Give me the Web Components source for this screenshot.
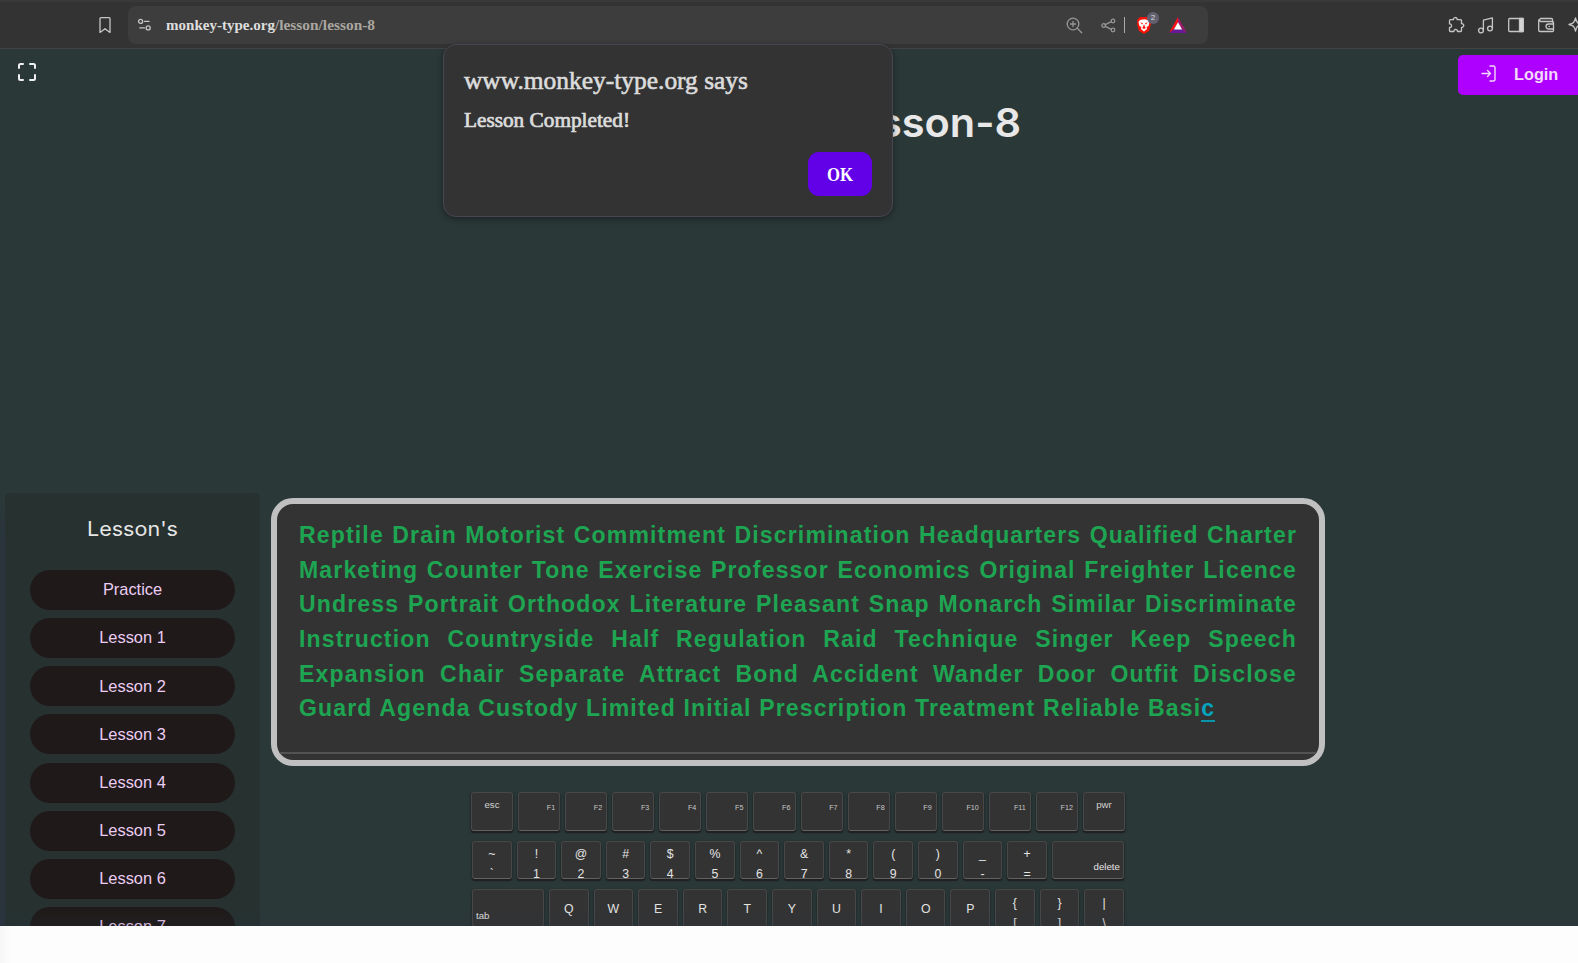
<!DOCTYPE html>
<html lang="en">
<head>
<meta charset="utf-8">
<title>Lesson-8</title>
<style>
html,body{margin:0;height:100%;overflow:hidden;background:#2b3838}
body{font-family:"Liberation Sans",Arial,sans-serif}
</style>
</head>
<body>
<typing-app></typing-app>
<script>
const make = (host, html) => { host.attachShadow({mode:'open'}).innerHTML = html; };

/* One line of text set to an exact measure. */
class FitText extends HTMLElement {
  connectedCallback() {
    const w = +this.getAttribute('width');
    make(this, `<style>:host{display:inline-block;width:${w}px;white-space:pre;text-align:left}span{display:inline-block;transform-origin:0 50%}</style><span><slot></slot></span>`);
    const s = this.shadowRoot.querySelector('span');
    s.style.transform = `scaleX(${w / s.getBoundingClientRect().width})`;
  }
}

class BrowserBar extends HTMLElement {
  connectedCallback() {
    make(this, `<style>
:host{display:flex;align-items:center;box-sizing:border-box;height:49px;background:#333;border-bottom:1px solid #434343;border-top:2px solid #393939;width:1578px;overflow:hidden;font-family:"Liberation Serif",serif}
svg{display:block;flex:none;fill:none;stroke:#c6c6c6;stroke-width:1.3;stroke-linecap:round;stroke-linejoin:round}
.bm{margin:0 17px 0 99px}
.url{display:flex;align-items:center;box-sizing:border-box;width:1080px;height:38px;border-radius:8px;background:#3d3d3d;padding-left:10px;color:#dedede;font-size:15px;font-weight:bold;flex:none}
.path{color:#aaa6a0}
.addr{margin-left:15px;flex:1;white-space:nowrap;line-height:20px}
.dim{stroke:#969696}
.sep{width:1px;height:16px;background:#aaa;margin:0 11px 0 8px}
.shield{position:relative;margin-right:17px}
.badge{position:absolute;left:11px;top:-4px;width:12px;height:12px;border-radius:6px;background:#626070;color:#ddd;font:8px/12px "Liberation Sans",sans-serif;text-align:center}
.right{display:flex;align-items:center;gap:12px;margin-left:239px}
</style>
<svg class="bm" width="12" height="18" viewBox="0 0 12 18"><path d="M2 1.6h8a1 1 0 0 1 1 1v13.8L6 12.7 1 16.4V2.600a1 1 0 0 1 1-1z"/></svg>
<div class="url">
<svg width="13" height="14" viewBox="0 0 13 14"><circle cx="2.600" cy="3.400" r="2"/><circle cx="10.200" cy="9.900" r="2"/><path d="M6.500 3.400h4.500M1.800 9.900h4.600"/></svg>
<div class="addr"><fit-text width="109">monkey-type.org</fit-text><fit-text class="path" width="100">/lesson/lesson-8</fit-text></div>
<svg class="dim" width="17" height="17" viewBox="0 0 17 17"><circle cx="7" cy="7" r="5.800"/><path d="M11.300 11.300l4.400 4.400M4.500 7h5M7 4.500v5"/></svg>
<svg class="dim" width="15" height="15" viewBox="0 0 15 15" style="margin-left:18px"><circle cx="2.700" cy="7.500" r="1.800"/><circle cx="12" cy="3" r="1.800"/><circle cx="12" cy="12" r="1.800"/><path d="M4.300 6.700l6-3M4.300 8.300l6 3"/></svg>
<div class="sep"></div>
<div class="shield"><svg width="16" height="18" viewBox="0 0 16 18" style="stroke:none"><path fill="#fb1206" d="M4 1h8l3 3-.5 2 .5 2-2 7-5 3-5-3L1 8l.5-2L1 4z"/><path fill="#fff" d="M4 4l4-.7L12 4l1.500 2-1 4-1.800 1 .3 2-3 2.500L5 13l.3-2-1.800-1-1-4z"/><path fill="#fb1206" d="M4.200 6.200l2.800 1-1 1.300zM11.800 6.200L9 7.200l1 1.300zM8 8l1 3 .8 1L8 13l-1.800-1 .8-1z"/></svg><div class="badge">2</div></div>
<svg width="18" height="16" viewBox="0 0 18 16" style="margin-right:21px;stroke:none"><path fill="#ff1018" d="M9 0v5.500L5 12.300 0 16z"/><path fill="#a0186c" d="M9 0l9 16-5-3.700L9 5.500z"/><path fill="#68189a" d="M0 16l5-3.700h8L18 16z"/><path fill="#fff" d="M9 5.200l4.100 7.200H4.900z"/></svg>
</div>
<div class="right">
<svg width="18" height="18" viewBox="0 0 18 18"><path d="M3.500 3.700h3c-.6-2.800 4-3 3.600 0h3.400a1 1 0 0 1 1 1v3c3-.4 3 4 0 3.600v3.200a1 1 0 0 1-1 1h-3c.2-2.800-3.800-2.600-3.600 0H3.500a1 1 0 0 1-1-1v-3c2.800.2 2.700-3.900 0-3.600V4.700a1 1 0 0 1 1-1z"/></svg>
<svg width="18" height="18" viewBox="0 0 18 18"><circle cx="4" cy="14.500" r="2.400"/><circle cx="13" cy="12.500" r="2.400"/><path d="M6.400 14.500V4.200l9-2.400v10.700"/></svg>
<svg width="18" height="18" viewBox="0 0 18 18"><rect x="1.700" y="2.500" width="14.600" height="13" rx="1"/><path d="M12.500 2.500h3.800v13h-3.800z" fill="#d6d6d6"/></svg>
<svg width="18" height="18" viewBox="0 0 18 18"><path d="M15.500 6V3.500a1 1 0 0 0-1-1h-11a1.800 1.800 0 0 0 0 3h12a1 1 0 0 1 1 1v8a1 1 0 0 1-1 1H3a1.300 1.300 0 0 1-1.300-1.300V4M16.500 8h-5a2.500 2.500 0 0 0 0 5h5M12 10.500h.3"/></svg>
<svg width="18" height="18" viewBox="0 0 18 18"><path d="M8.500 2c1 4.500 2 5.500 6.500 6.500-4.500 1-5.500 2-6.500 6.500-1-4.500-2-5.500-6.500-6.500C6.500 7.500 7.500 6.500 8.500 2z"/></svg>
</div>`);
  }
}

class LessonList extends HTMLElement {
  connectedCallback() {
    const items = ['Practice', ...Array.from({length: 7}, (_, i) => 'Lesson ' + (i + 1))];
    make(this, `<style>
:host{display:flex;flex-direction:column;align-items:center;box-sizing:border-box;width:255px;height:433px;background:#263130;border-radius:5px 5px 0 0;overflow:hidden;padding-top:24px}
h2{margin:0 0 29px;font:400 20px/24px Inter,sans-serif;color:#e6e6e6}
button{flex:none;width:205px;height:40px;border:0;border-radius:20px;background:#1f1a19;color:#eccdf3;font:16.400px/38px "Liberation Sans",sans-serif;padding:0 0 1.500px;margin-bottom:8.150px}
</style><h2><fit-text width="91">Lesson's</fit-text></h2>${items.map(t => `<button>${t}</button>`).join('')}`);
  }
}

class TypingPanel extends HTMLElement {
  connectedCallback() {
    const lines = [
      'Reptile Drain Motorist Commitment Discrimination Headquarters Qualified Charter',
      'Marketing Counter Tone Exercise Professor Economics Original Freighter Licence',
      'Undress Portrait Orthodox Literature Pleasant Snap Monarch Similar Discriminate',
      'Instruction Countryside Half Regulation Raid Technique Singer Keep Speech',
      'Expansion Chair Separate Attract Bond Accident Wander Door Outfit Disclose'];
    make(this, `<style>
:host{display:block;box-sizing:border-box;width:1054px;height:268px;border:6px solid #c0c0c0;border-radius:22px;background:#333;overflow:hidden}
.text{box-sizing:border-box;height:250px;border-bottom:2px solid #525252;padding:14.200px 22px 0 22px;font:bold 23.040px/34.600px "Liberation Sans",sans-serif;letter-spacing:1.152px;color:#1ea552}
p{margin:0;white-space:nowrap;text-align-last:justify}
p:last-child{text-align-last:left}
b{color:#06a5be;border-bottom:2px solid #0894a9;display:inline-block;line-height:23px}
</style><div class="text">${lines.map(l => `<p>${l}</p>`).join('')}<p>Guard Agenda Custody Limited Initial Prescription Treatment Reliable Basi<b>c</b></p></div>`);
  }
}

/* kind: fn | mod | pair | letter | left | right */
class KeyCap extends HTMLElement {
  connectedCallback() {
    make(this, `<style>
:host{display:flex;flex-direction:column;flex:1 1 0;box-sizing:border-box;min-width:0;height:39px;border:1px solid #484848;border-bottom-color:#626262;border-radius:3px;background:#333;color:#e4e4e4;font-size:12.300px;line-height:20px;text-align:center;box-shadow:0 2px 0 #202020,0 1px 2px 1px #222b2b}
:host([kind=fn]){font-size:7.200px;line-height:9px;padding:10px 4px 0 0;text-align:right;color:#c8c8c8}
:host([kind=mod]){font-size:9.700px;line-height:12px;padding-top:6px;color:#d2d2d2}
:host([kind=pair]){padding-top:2px;height:38px}
:host([kind=letter]){line-height:38px}
:host([kind=left]),:host([kind=right]){flex:0 0 72px;height:38px;font-size:9.700px;line-height:12px;padding:20px 4px 0 3px;text-align:left}
:host([kind=right]){text-align:right;padding:19px 3px 0 3px}
</style><slot></slot>`);
  }
}

class KeyBoard extends HTMLElement {
  connectedCallback() {
    const esc = s => s.replace('&', '&amp;');
    const key = (kind, t) => `<key-cap kind="${kind}">${t}</key-cap>`;
    const pair = s => key('pair', `<span>${esc(s[0])}</span><span>${s[1]}</span>`);
    const fns = Array.from({length: 12}, (_, i) => key('fn', 'F' + (i + 1))).join('');
    make(this, `<style>
:host{display:flex;flex-direction:column;align-items:center;width:654px;height:134px;overflow:hidden;padding:0 3px}
.row{display:flex;gap:5px;width:652px;height:48px;flex:none}
.row:last-child key-cap[kind=pair]{padding-top:3px}
.row.f{display:grid;grid-template-columns:repeat(14,minmax(0,1fr));width:654px;height:49px}
</style>
<div class="row f">${key('mod','esc')}${fns}${key('mod','pwr')}</div>
<div class="row">${['~`','!1','@2','#3','$4','%5','^6','&7','*8','(9',')0','_-','+='].map(pair).join('')}${key('right','delete')}</div>
<div class="row">${key('left','tab')}${[...'QWERTYUIOP'].map(c => key('letter', c)).join('')}${['{[','}]','|\\'].map(pair).join('')}</div>`);
  }
}

class AlertDialog extends HTMLElement {
  connectedCallback() {
    make(this, `<style>
:host{display:flex;flex-direction:column;box-sizing:border-box;width:450px;height:173px;background:#333;border:1px solid #484650;border-radius:13px;padding:19px 20px 20px;box-shadow:0 2px 6px #0006;font-family:"Liberation Serif",serif;color:#dcdcdc}
h3{margin:0;font-size:25px;line-height:34px;font-weight:400;-webkit-text-stroke:.6px}
p{margin:7px 0 0;font-size:20px;line-height:30px;-webkit-text-stroke:.7px}
button{align-self:flex-end;margin-top:17px;width:64px;height:44px;border:0;border-radius:11px;background:#6200e8;color:#fff;font:bold 19px/44px "Liberation Serif",serif;padding:1px 0 0;flex:none}
</style><h3><fit-text width="284">www.monkey-type.org says</fit-text></h3><p><fit-text width="166">Lesson Completed!</fit-text></p><button><fit-text width="26">OK</fit-text></button>`);
  }
}

class TypingApp extends HTMLElement {
  connectedCallback() {
    make(this, `<style>
:host{display:flex;flex-direction:column;width:1578px;height:963px;overflow:hidden;position:relative;background:#2b3838}
header{display:flex;justify-content:space-between;height:45px;padding:6px 0 0 17px}
header svg{fill:none;stroke:#f0f0f0;stroke-width:2;stroke-linecap:round}
.full{margin-top:7px}
.login{display:flex;align-items:center;box-sizing:border-box;width:124px;height:40px;margin-right:-4px;border-radius:5px;border:0;background:#ae00ff;color:#f3d9fb;font:bold 16.300px "Liberation Sans",sans-serif;padding:0 0 2px 23px;gap:18px}
.login svg{stroke-width:1.400;stroke:#f3d9fb;stroke-linejoin:round;margin-top:-1px}
h1{margin:0 0 0 831px;height:393px;font:600 40px/46px Inter,sans-serif;color:#e8e8e8}
main{display:flex;height:433px;padding-left:5px;flex:none}
section{display:flex;flex-direction:column;margin-left:11px;padding-top:5px}
key-board{margin:26px 0 0 197px}
footer{flex:1;background:linear-gradient(90deg,#f6f6f6,#fdfdfd 12px)}
alert-dialog{position:absolute;left:443px;top:44px}
.edge{position:absolute;left:0;top:500px;width:5px;height:426px;background:linear-gradient(#2b3838,#29343d 40px)}
.fade{position:absolute;left:0;top:908px;width:100%;height:18px;background:linear-gradient(#27304000,#27304030)}
</style>
<browser-bar></browser-bar>
<header><svg class="full" width="20" height="20" viewBox="0 0 20 20"><path d="M2 6V3.500A1.500 1.500 0 0 1 3.500 2H6M13 2h3.500A1.500 1.500 0 0 1 18 3.500V6M18 13v3.500a1.500 1.500 0 0 1-1.500 1.500H13M6 18H3.500A1.500 1.500 0 0 1 2 16.500V13"/></svg>
<button class="login"><svg width="15" height="17" viewBox="0 0 15 17"><path d="M1 8.500h8.500M6.500 5.500l3 3-3 3M9 1h3.500A1.500 1.500 0 0 1 14 2.500v12a1.500 1.500 0 0 1-1.500 1.500H9"/></svg>Login</button></header>
<h1><fit-text width="190">Lesson-8</fit-text></h1>
<main><lesson-list></lesson-list><section><typing-panel></typing-panel><key-board></key-board></section></main>
<footer></footer><div class="edge"></div><div class="fade"></div>
<alert-dialog></alert-dialog>`);
  }
}
for (const [n, c] of [['fit-text',FitText],['browser-bar',BrowserBar],['lesson-list',LessonList],['typing-panel',TypingPanel],['key-cap',KeyCap],['key-board',KeyBoard],['alert-dialog',AlertDialog],['typing-app',TypingApp]]) customElements.define(n, c);
</script>
</body>
</html>
